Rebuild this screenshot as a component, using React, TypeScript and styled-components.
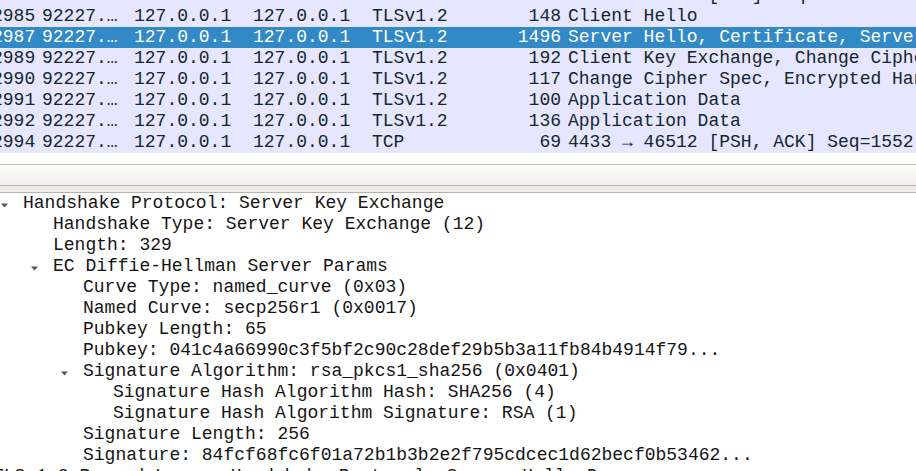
import React from 'react';
import styled, { createGlobalStyle } from 'styled-components';

interface Packet {
  no: string;
  time: string;
  source: string;
  destination: string;
  protocol: string;
  length: string;
  info: string;
  selected?: boolean;
}

interface TreeItem {
  level: number;
  text: string;
  expanded?: boolean;
}

const packets: Packet[] = [
  { no: '2983', time: '92227.…', source: '127.0.0.1', destination: '127.0.0.1', protocol: 'TCP', length: '68', info: '46512 → 4433 [ACK] Seq=1 Ack=1 Win=65536 Len=0 TSval=…' },
  { no: '2985', time: '92227.…', source: '127.0.0.1', destination: '127.0.0.1', protocol: 'TLSv1.2', length: '148', info: 'Client Hello' },
  { no: '2987', time: '92227.…', source: '127.0.0.1', destination: '127.0.0.1', protocol: 'TLSv1.2', length: '1496', info: 'Server Hello, Certificate, Server Key Exchange, Server Hello Done', selected: true },
  { no: '2989', time: '92227.…', source: '127.0.0.1', destination: '127.0.0.1', protocol: 'TLSv1.2', length: '192', info: 'Client Key Exchange, Change Cipher Spec, Encrypted Handshake Message' },
  { no: '2990', time: '92227.…', source: '127.0.0.1', destination: '127.0.0.1', protocol: 'TLSv1.2', length: '117', info: 'Change Cipher Spec, Encrypted Handshake Message' },
  { no: '2991', time: '92227.…', source: '127.0.0.1', destination: '127.0.0.1', protocol: 'TLSv1.2', length: '100', info: 'Application Data' },
  { no: '2992', time: '92227.…', source: '127.0.0.1', destination: '127.0.0.1', protocol: 'TLSv1.2', length: '136', info: 'Application Data' },
  { no: '2994', time: '92227.…', source: '127.0.0.1', destination: '127.0.0.1', protocol: 'TCP', length: '69', info: '4433 → 46512 [PSH, ACK] Seq=1552 Ack=… Win=… Len=…' },
];

const details: TreeItem[] = [
  { level: 0, text: 'Handshake Protocol: Server Key Exchange', expanded: true },
  { level: 1, text: 'Handshake Type: Server Key Exchange (12)' },
  { level: 1, text: 'Length: 329' },
  { level: 1, text: 'EC Diffie-Hellman Server Params', expanded: true },
  { level: 2, text: 'Curve Type: named_curve (0x03)' },
  { level: 2, text: 'Named Curve: secp256r1 (0x0017)' },
  { level: 2, text: 'Pubkey Length: 65' },
  { level: 2, text: 'Pubkey: 041c4a66990c3f5bf2c90c28def29b5b3a11fb84b4914f79...' },
  { level: 2, text: 'Signature Algorithm: rsa_pkcs1_sha256 (0x0401)', expanded: true },
  { level: 3, text: 'Signature Hash Algorithm Hash: SHA256 (4)' },
  { level: 3, text: 'Signature Hash Algorithm Signature: RSA (1)' },
  { level: 2, text: 'Signature Length: 256' },
  { level: 2, text: 'Signature: 84fcf68fc6f01a72b1b3b2e2f795cdcec1d62becf0b53462...' },
  { level: -1, text: 'TLSv1.2 Record Layer: Handshake Protocol: Server Hello Done', expanded: true },
];

const App: React.FC = () => {
  return (
    <StyledWindow>
      <GlobalStyle />
      <StyledPacketList>
        <StyledPacketRows>
          {packets.map((p) => (
            <StyledPacketRow key={p.no} $selected={p.selected}>
              <StyledNumberCell>{p.no}</StyledNumberCell>
              <StyledCell>{p.time}</StyledCell>
              <StyledCell>{p.source}</StyledCell>
              <StyledCell>{p.destination}</StyledCell>
              <StyledCell>{p.protocol}</StyledCell>
              <StyledNumberCell>{p.length}</StyledNumberCell>
              <StyledCell>{p.info}</StyledCell>
            </StyledPacketRow>
          ))}
        </StyledPacketRows>
      </StyledPacketList>

      <StyledSplitter />
      <StyledSplitterHandle />

      <StyledDetailTree>
        {details.map((item, i) => (
          <StyledTreeRow key={i}>
            <StyledIndent $level={item.level} />
            <StyledExpander>
              {item.expanded && (
                <svg width="7" height="5" viewBox="0 0 7 5">
                  <polygon points="0,0.5 7,0.5 3.5,4.5" fill="#555" />
                </svg>
              )}
            </StyledExpander>
            <span>{item.text}</span>
          </StyledTreeRow>
        ))}
      </StyledDetailTree>
    </StyledWindow>
  );
};

export default App;

const GlobalStyle = createGlobalStyle`
  html, body {
    margin: 0;
    padding: 0;
    background: #ffffff;
    overflow: hidden;
  }
`;

const StyledWindow = styled.div`
  width: 916px;
  height: 471px;
  overflow: hidden;
  background: #ffffff;
  font-family: 'Liberation Mono', 'DejaVu Sans Mono', monospace;
  font-size: 18px;
  line-height: 21px;
`;

const StyledPacketList = styled.div`
  height: 164px;
  overflow: hidden;
  background: #ffffff;
`;

const StyledPacketRows = styled.div`
  margin-top: -15px;
  margin-left: -8px;
`;

const StyledPacketRow = styled.div<{ $selected?: boolean }>`
  display: grid;
  grid-template-columns: 50px 92px 119px 119px 110px 86px 1fr;
  height: 21px;
  white-space: nowrap;
  background: ${(p) => (p.$selected ? '#3189c6' : '#e7e6ff')};
  color: ${(p) => (p.$selected ? '#ffffff' : '#12272e')};
`;

const StyledCell = styled.div`
  overflow: hidden;
`;

const StyledNumberCell = styled.div`
  text-align: right;
  padding-right: 7px;
  overflow: hidden;
`;

const StyledSplitter = styled.div`
  height: 20px;
  border-top: 1px solid #c2bfba;
  border-bottom: 1px solid #b9b5b0;
  background: linear-gradient(#fdfdfc, #f0eeec);
`;

const StyledSplitterHandle = styled.div`
  height: 6px;
  background: #efebe7;
  border-bottom: 1px solid #b6b2ad;
`;

const StyledDetailTree = styled.div`
  margin-left: -30px;
  color: #141414;
`;

const StyledTreeRow = styled.div`
  display: flex;
  align-items: center;
  height: 21px;
  white-space: nowrap;
`;

const StyledIndent = styled.div<{ $level: number }>`
  flex: none;
  width: ${(p) => (p.$level + 1) * 30}px;
`;

const StyledExpander = styled.div`
  flex: none;
  width: 23px;
  height: 21px;
  display: flex;
  align-items: center;
  padding-left: 1px;
  padding-top: 4px;
  box-sizing: border-box;
`;
